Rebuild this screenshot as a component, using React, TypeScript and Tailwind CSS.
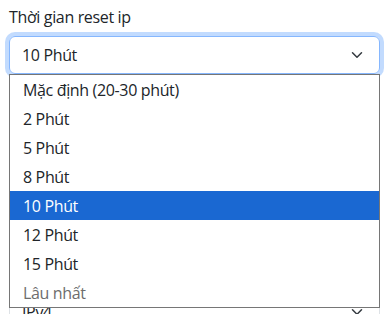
import React from "react";

const Chevron = () => (
  <svg width="16" height="12" viewBox="0 0 16 16" fill="none" className="shrink-0">
    <path d="M2 5l6 6 6-6" stroke="#343a40" strokeWidth="2" strokeLinecap="round" strokeLinejoin="round" />
  </svg>
);

const options = [
  "Mặc định (20-30 phút)",
  "2 Phút",
  "5 Phút",
  "8 Phút",
  "10 Phút",
  "12 Phút",
  "15 Phút",
  "Lâu nhất",
];

export default function App() {
  return (
    <div
      className="w-[390px] h-[314px] overflow-hidden bg-white text-[#212529] text-[16px] tracking-[-0.35px]"
      style={{ fontFamily: '"Open Sans", "Noto Sans", sans-serif' }}
    >
      <div className="pl-[9px] pr-[10px] pt-[5px]">
        <div className="leading-6 mb-[7px]">Thời gian reset ip</div>
        <div className="relative">
          <div className="h-[38px] flex items-center justify-between rounded-[6px] border border-[#86b7fe] shadow-[0_0_0_4px_rgba(13,110,253,0.25)] pl-[12px] pr-[14px]">
            <span>10 Phút</span>
            <Chevron />
          </div>
          <div className="absolute left-0 right-0 top-[38px] z-10 bg-white border border-[#767676]">
            {options.map((o) => (
              <div
                key={o}
                className={
                  "h-[29px] flex items-center pl-[13px] " +
                  (o === "10 Phút"
                    ? "bg-[#1a68d2] text-white"
                    : o === "Lâu nhất"
                    ? "text-[#6d6d6d]"
                    : "text-[#212529]")
                }
              >
                {o}
              </div>
            ))}
          </div>
        </div>
        <div className="mt-[219px] h-[38px] flex items-center justify-between rounded-[6px] border border-[#dee2e6] pl-[12px] pr-[14px]">
          <span>IPv4</span>
          <Chevron />
        </div>
      </div>
    </div>
  );
}
